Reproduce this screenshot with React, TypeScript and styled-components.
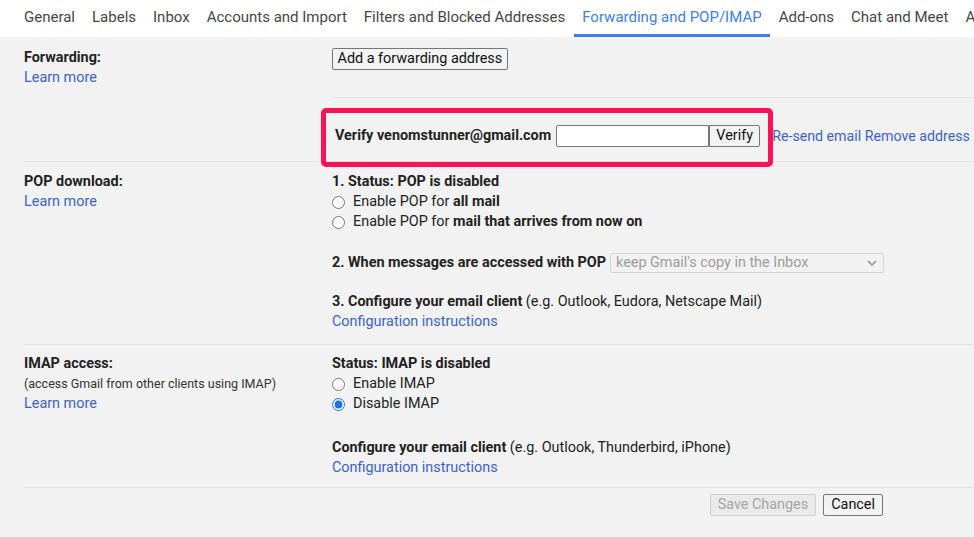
import React from "react";
import styled, { createGlobalStyle } from "styled-components";

const Global = createGlobalStyle`
  html, body { margin: 0; padding: 0; }
  body {
    background: #f2f2f2;
    font-family: Roboto, "Liberation Sans", Arial, sans-serif;
    color: #222;
    font-size: 14.4px;
  }
`;

const Page = styled.div`
  width: 974px;
  min-height: 537px;
  overflow: hidden;
`;

const TabBar = styled.nav`
  display: flex;
  height: 37px;
  background: #fff;
  padding-left: 15.5px;
  white-space: nowrap;
  overflow: hidden;
`;

const Tab = styled.div<{ $active?: boolean }>`
  display: flex;
  align-items: center;
  padding: 0 8.5px;
  font-size: 15px;
  color: ${(p) => (p.$active ? "#3f7ee3" : "#444746")};
  border-bottom: 3px solid ${(p) => (p.$active ? "#3f7ee3" : "transparent")};
  box-sizing: border-box;
`;

const Content = styled.div`
  padding-left: 24px;
`;

const Section = styled.section<{ $pt?: number; $pb?: number }>`
  display: grid;
  grid-template-columns: 308px 1fr;
  padding-top: ${(p) => p.$pt ?? 10}px;
  padding-bottom: ${(p) => p.$pb ?? 10}px;
  border-bottom: 1px solid #e2e2e2;
  line-height: 20px;
`;

const LabelCol = styled.div<{ $pt?: number }>`
  display: flex;
  flex-direction: column;
  padding-top: ${(p) => p.$pt ?? 0}px;
`;

const Label = styled.div`
  font-weight: 700;
`;

const Note = styled.div`
  font-size: 12.5px;
  color: #333;
`;

const Link = styled.a`
  color: #3d63c2;
  text-decoration: none;
  cursor: pointer;
`;

const RightCol = styled.div`
  display: flex;
  flex-direction: column;
`;

const Button = styled.button<{ $disabled?: boolean }>`
  font-family: Roboto, "Liberation Sans", Arial, sans-serif;
  font-size: 14.4px;
  height: 22px;
  padding: 0 6px;
  line-height: 20px;
  border-radius: 2px;
  border: 1px solid ${(p) => (p.$disabled ? "#cfcfcf" : "#767676")};
  background: ${(p) => (p.$disabled ? "#eaeaea" : "#f3f3f3")};
  color: ${(p) => (p.$disabled ? "#a5a5a5" : "#111")};
`;

const AddButton = styled(Button)`
  padding: 0 4.5px;
`;

const ButtonRow = styled.div`
  display: flex;
  margin-top: 1px;
`;

const SubDivider = styled.div`
  height: 1px;
  background: #e2e2e2;
  margin-top: 27px;
`;

const VerifyRow = styled.div`
  position: relative;
  display: flex;
  align-items: center;
  height: 22px;
  margin-top: 27px;
  padding-left: 3px;
  white-space: nowrap;
`;

const Highlight = styled.div`
  position: absolute;
  left: -11px;
  top: -17px;
  width: 452px;
  height: 59px;
  box-sizing: border-box;
  border: 5px solid #ff1158;
  border-radius: 5px;
  pointer-events: none;
`;

const CodeInput = styled.input`
  width: 153px;
  height: 22px;
  box-sizing: border-box;
  margin: 0 0 0 5px;
  border: 1px solid #767676;
  border-radius: 2px 0 0 2px;
  background: #fff;
`;

const VerifyButton = styled(Button)`
  border-radius: 0 2px 2px 0;
  width: 51px;
`;

const LinkGroup = styled.span`
  margin-left: 12px;
  font-size: 14.2px;
`;

const Line = styled.div<{ $mt?: number }>`
  margin-top: ${(p) => p.$mt ?? 0}px;
`;

const Bold = styled.span`
  font-weight: 700;
`;

const RadioRow = styled.label`
  display: flex;
  align-items: center;
`;

const Radio = styled.input`
  width: 13px;
  height: 13px;
  margin: 0 8px 0 0;
  accent-color: #1a73e8;
`;

const InlineRow = styled.div<{ $mt?: number }>`
  display: flex;
  align-items: center;
  margin-top: ${(p) => p.$mt ?? 0}px;
`;

const FakeSelect = styled.div`
  display: flex;
  align-items: center;
  justify-content: space-between;
  box-sizing: border-box;
  width: 274px;
  height: 20px;
  margin-left: 4px;
  padding: 0 6px 0 5px;
  border: 1px solid #d3d3d3;
  border-radius: 2px;
  color: #9c9c9c;
`;

const Footer = styled.div`
  display: flex;
  justify-content: flex-end;
  gap: 7px;
  padding: 6px 91px 0 0;
`;

const FooterButton = styled(Button)`
  padding: 0 7px;
`;

const tabs = [
  "General",
  "Labels",
  "Inbox",
  "Accounts and Import",
  "Filters and Blocked Addresses",
  "Forwarding and POP/IMAP",
  "Add-ons",
  "Chat and Meet",
  "Advanced",
];

export default function App() {
  return (
    <Page>
      <Global />
      <TabBar>
        {tabs.map((t) => (
          <Tab key={t} $active={t === "Forwarding and POP/IMAP"}>
            {t}
          </Tab>
        ))}
      </TabBar>
      <Content>
        <Section $pt={10} $pb={14}>
          <LabelCol $pt={1}>
            <Label>Forwarding:</Label>
            <Link>Learn more</Link>
          </LabelCol>
          <RightCol>
            <ButtonRow>
              <AddButton>Add a forwarding address</AddButton>
            </ButtonRow>
            <SubDivider />
            <VerifyRow>
              <Bold>Verify venomstunner@gmail.com</Bold>
              <CodeInput type="text" />
              <VerifyButton>Verify</VerifyButton>
              <LinkGroup>
                <Link>Re-send email</Link> <Link>Remove address</Link>
              </LinkGroup>
              <Highlight />
            </VerifyRow>
          </RightCol>
        </Section>

        <Section $pt={10} $pb={12}>
          <LabelCol>
            <Label>POP download:</Label>
            <Link>Learn more</Link>
          </LabelCol>
          <RightCol>
            <Line>
              <Bold>1. Status: POP is disabled</Bold>
            </Line>
            <RadioRow>
              <Radio type="radio" name="pop" />
              <span>
                Enable POP for <Bold>all mail</Bold>
              </span>
            </RadioRow>
            <RadioRow>
              <Radio type="radio" name="pop" />
              <span>
                Enable POP for <Bold>mail that arrives from now on</Bold>
              </span>
            </RadioRow>
            <InlineRow $mt={21}>
              <Bold>2. When messages are accessed with POP</Bold>
              <FakeSelect>
                <span>keep Gmail's copy in the Inbox</span>
                <svg width="10" height="6" viewBox="0 0 10 6">
                  <path d="M1 1l4 4 4-4" fill="none" stroke="#8a8a8a" strokeWidth="1.4" />
                </svg>
              </FakeSelect>
            </InlineRow>
            <Line $mt={19}>
              <Bold>3. Configure your email client</Bold> (e.g. Outlook, Eudora, Netscape Mail)
            </Line>
            <Link>Configuration instructions</Link>
          </RightCol>
        </Section>

        <Section $pt={9} $pb={9}>
          <LabelCol>
            <Label>IMAP access:</Label>
            <Note>(access Gmail from other clients using IMAP)</Note>
            <Link>Learn more</Link>
          </LabelCol>
          <RightCol>
            <Line>
              <Bold>Status: IMAP is disabled</Bold>
            </Line>
            <RadioRow>
              <Radio type="radio" name="imap" />
              <span>Enable IMAP</span>
            </RadioRow>
            <RadioRow>
              <Radio type="radio" name="imap" defaultChecked />
              <span>Disable IMAP</span>
            </RadioRow>
            <Line $mt={24}>
              <Bold>Configure your email client</Bold> (e.g. Outlook, Thunderbird, iPhone)
            </Line>
            <Link>Configuration instructions</Link>
          </RightCol>
        </Section>
        <Footer>
          <FooterButton $disabled disabled>
            Save Changes
          </FooterButton>
          <FooterButton>Cancel</FooterButton>
        </Footer>
      </Content>
    </Page>
  );
}
